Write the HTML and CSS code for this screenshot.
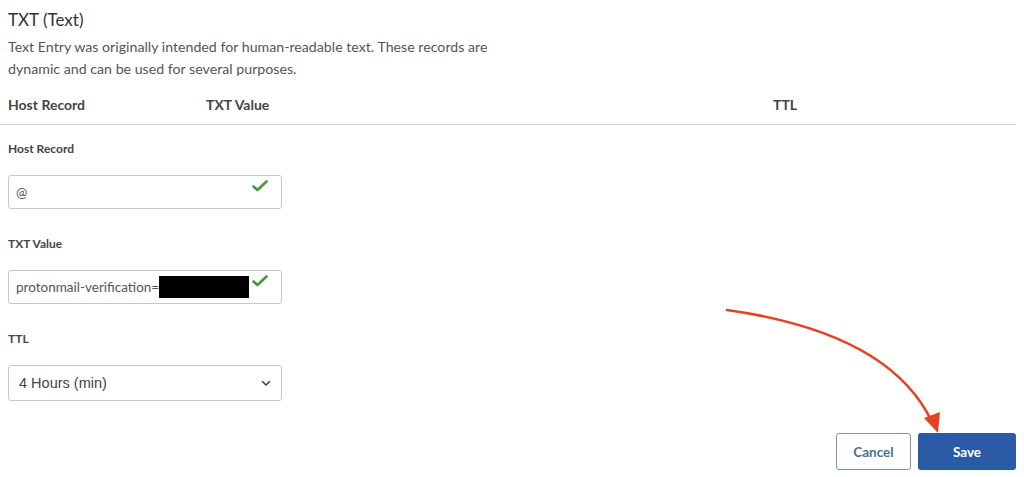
FILE: index.html
```html
<!DOCTYPE html>
<html lang="en">
<head>
    <meta charset="UTF-8">
    <title>TXT (Text)</title>
    <link rel="stylesheet" href="styles.css">
</head>
<body>
    <div class="panel">
        <div class="intro">
            <h2>TXT (Text)</h2>
            <p>Text Entry was originally intended for human-readable text. These records are<br>dynamic and can be used for several purposes.</p>
        </div>

        <div class="table-head">
            <span class="col-host">Host Record</span>
            <span class="col-value">TXT Value</span>
            <span class="col-ttl">TTL</span>
        </div>

        <form class="record-form">
            <div class="field">
                <label>Host Record</label>
                <div class="input-box">
                    <span class="input-text">@</span>
                    <svg class="check" width="16" height="12" viewBox="0 0 16 12"><path d="M1.5 6.5 L5.5 10 L14.5 1.5" fill="none" stroke="#3c9b3c" stroke-width="2.6" stroke-linecap="round" stroke-linejoin="round"/></svg>
                </div>
            </div>

            <div class="field">
                <label>TXT Value</label>
                <div class="input-box">
                    <span class="input-text">protonmail-verification=</span>
                    <span class="redacted"></span>
                    <svg class="check" width="16" height="12" viewBox="0 0 16 12"><path d="M1.5 6.5 L5.5 10 L14.5 1.5" fill="none" stroke="#3c9b3c" stroke-width="2.6" stroke-linecap="round" stroke-linejoin="round"/></svg>
                </div>
            </div>

            <div class="field last">
                <label>TTL</label>
                <div class="select-box">
                    <span class="select-text">4 Hours (min)</span>
                    <svg class="chevron" width="10" height="7" viewBox="0 0 10 7"><path d="M1.5 1.5 L5 5 L8.5 1.5" fill="none" stroke="#444" stroke-width="1.6" stroke-linecap="round" stroke-linejoin="round"/></svg>
                </div>
            </div>
        </form>

        <div class="actions">
            <button class="btn-cancel" type="button">Cancel</button>
            <button class="btn-save" type="button">Save</button>
        </div>
    </div>

    <!-- hand drawn arrow pointing at Save -->
    <svg class="arrow" width="1024" height="477" viewBox="0 0 1024 477">
        <path d="M727 310 Q890 333 932 422" fill="none" stroke="#e4431f" stroke-width="2.6" stroke-linecap="round"/>
        <path d="M938 433 L924 418 L940 412 Z" fill="#e4431f"/>
    </svg>
</body>
</html>
```

FILE: styles.css
```css
body, h2, p {
    margin: 0;
    padding: 0;
}

body {
    font-family: Lato, "Open Sans", sans-serif;
    color: #444;
    background: #fff;
}

.panel {
    width: 1016px;
    position: relative;
}

.intro {
    padding: 8px 8px 0;
}

.intro h2 {
    font-size: 17px;
    font-weight: 400;
    line-height: 24px;
    color: #333;
}

.intro p {
    margin-top: 4px;
    font-size: 14.2px;
    line-height: 22px;
    color: #555;
}

.table-head {
    display: flex;
    margin-top: 15px;
    padding: 0 8px 9px;
    border-bottom: 1px solid #d4d4d4;
    font-size: 14px;
    font-weight: 700;
    line-height: 20px;
    color: #444;
}

.col-host {
    width: 198px;
}

.col-value {
    width: 567px;
}

.record-form {
    padding: 14px 8px 0;
}

.field {
    margin-bottom: 25px;
}

.field.last {
    margin-bottom: 0;
}

.field label {
    display: block;
    font-size: 12px;
    font-weight: 700;
    line-height: 20px;
    color: #444;
    margin-bottom: 16px;
}

.input-box, .select-box {
    width: 274px;
    height: 34px;
    box-sizing: border-box;
    border: 1px solid #c6c6c6;
    border-radius: 3px;
    display: flex;
    align-items: center;
    position: relative;
}

.input-box {
    padding: 0 7px;
}

.input-text {
    font-size: 13.5px;
    color: #555;
}

.redacted {
    width: 90px;
    height: 22px;
    background: #000;
}

.check {
    position: absolute;
    right: 13px;
    top: 4px;
}

.select-box {
    height: 36px;
    margin-top: 1px;
    padding: 0 10px;
    justify-content: space-between;
}

.select-text {
    font-family: "Liberation Sans", Arial, sans-serif;
    font-size: 14.5px;
    color: #444;
}

.actions {
    display: flex;
    justify-content: flex-end;
    gap: 7px;
    margin-top: 32px;
}

.actions button {
    height: 37px;
    border-radius: 3px;
    font-family: Lato, sans-serif;
    font-size: 13.5px;
    font-weight: 700;
    cursor: pointer;
}

.btn-cancel {
    width: 75px;
    background: #fff;
    border: 1px solid #7d98ad;
    color: #4d6e8a;
}

.btn-save {
    width: 98px;
    background: #2b5aa6;
    border: none;
    color: #fff;
}

.arrow {
    position: absolute;
    top: 0;
    left: 0;
    pointer-events: none;
}
```
